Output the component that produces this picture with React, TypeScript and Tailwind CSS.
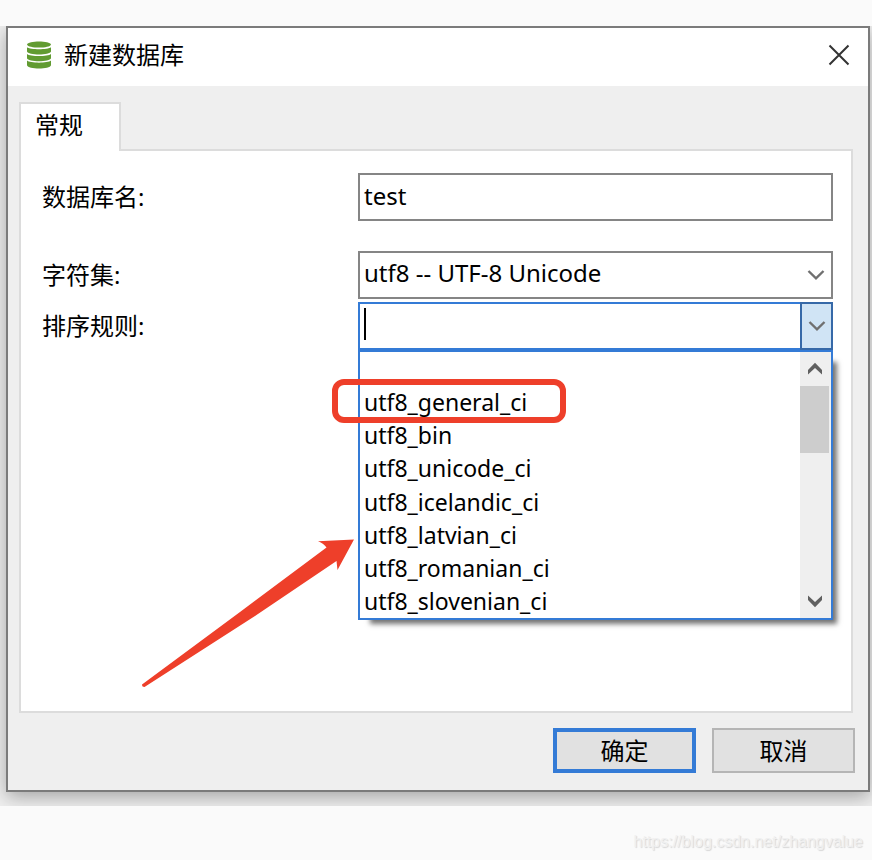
import React, { useState } from 'react';

const collations = [
  '',
  'utf8_general_ci',
  'utf8_bin',
  'utf8_unicode_ci',
  'utf8_icelandic_ci',
  'utf8_latvian_ci',
  'utf8_romanian_ci',
  'utf8_slovenian_ci',
];

const DatabaseIcon = () => (
  <svg width="24" height="28" viewBox="0 0 24 28" fill="#619b31" aria-hidden="true">
    <path d="M0 3.400C1-.6 23-.6 24 3.400 23 7.600 1 7.600 0 3.400z" />
    <path d="M0 6.200c3 2.600 21 2.600 24 0v4.400c-1 4-23 4-24 0z" />
    <path d="M0 13c3 2.700 21 2.700 24 0v4.200c-1 4-23 4-24 0z" />
    <path d="M0 19.600c3 2.700 21 2.700 24 0v4.600c-1 4.400-23 4.400-24 0z" />
  </svg>
);

const ComboChevron = () => (
  <svg width="18" height="12" viewBox="0 0 18 12" fill="none" stroke="#707070" strokeWidth="2.400" aria-hidden="true">
    <path d="M1.500 2 9 9.300 16.500 2" />
  </svg>
);

const ScrollChevron = ({ down = false }: { down?: boolean }) => (
  <svg width="16" height="14" viewBox="0 0 16 14" fill="#606060" aria-hidden="true">
    {down ? <path d="M1 1.500 8 8 15 1.500V6L8 13.200 1 6z" /> : <path d="M1 12.500 8 6l7 6.500V8L8 .8 1 8z" />}
  </svg>
);

const App: React.FC = () => {
  const [name, setName] = useState('test');
  const [collation, setCollation] = useState('');

  return (
    <div className="min-h-screen bg-[#fafafa] pt-[26px] font-['Noto_Sans','Noto_Sans_CJK_SC',sans-serif] text-[24px] text-black">
      <div className="overflow-hidden bg-[#f0f0f0] pl-[6px] pr-[2px] pb-[14px]">
        <div className="border-2 border-[#7b7b7b] bg-[#efefef] shadow-[0_5px_18px_rgba(0,0,0,0.32)]">
          {/* Title bar */}
          <div className="flex h-[58px] items-center bg-white pl-[19px] pr-[18px] pb-1">
            <DatabaseIcon />
            <h1 className="ml-[13px] flex-1">新建数据库</h1>
            <button aria-label="关闭">
              <svg width="22" height="22" viewBox="0 0 22 22" stroke="#333" strokeWidth="2" aria-hidden="true">
                <path d="M1.500 1.500l19 19M20.500 1.500l-19 19" />
              </svg>
            </button>
          </div>

          <div className="pl-[11px] pr-[15px] pt-4">
            {/* Tabs */}
            <div role="tablist" className="flex">
              <button
                role="tab"
                aria-selected="true"
                className="relative z-10 -mb-[2px] h-[49px] w-[102px] border-2 border-b-0 border-[#dcdcdc] bg-white pb-[6px] pl-[14px] text-left leading-none"
              >
                常规
              </button>
            </div>

            {/* General panel */}
            <div className="min-h-[564px] border-2 border-[#dcdcdc] bg-white pl-[21px] pr-[18px] pt-[22px]">
              <div className="grid grid-cols-[316px_1fr]">
                <label htmlFor="db-name" className="leading-[48px]">数据库名:</label>
                <input
                  id="db-name"
                  type="text"
                  value={name}
                  onChange={e => setName(e.target.value)}
                  className="mb-[30px] h-12 w-full border-2 border-[#858585] bg-white px-1 pb-1 outline-none"
                />

                <label htmlFor="charset" className="leading-[48px]">字符集:</label>
                <div className="relative mb-[3px]">
                  <select
                    id="charset"
                    className="h-12 w-full appearance-none border-2 border-[#858585] bg-white px-1 pb-1 outline-none"
                  >
                    <option>utf8 -- UTF-8 Unicode</option>
                  </select>
                  <span className="pointer-events-none absolute inset-y-0 right-2 flex items-center">
                    <ComboChevron />
                  </span>
                </div>

                <label htmlFor="collation" className="leading-[48px]">排序规则:</label>
                <div className="relative">
                  <div className="relative flex h-12">
                    <input
                      id="collation"
                      type="text"
                      role="combobox"
                      aria-expanded="true"
                      aria-controls="collation-list"
                      value={collation}
                      onChange={e => setCollation(e.target.value)}
                      className="h-full min-w-0 flex-1 border-2 border-r-0 border-[#347bd6] bg-white px-1 outline-none"
                    />
                    {/* Text cursor */}
                    {!collation && <span className="absolute left-[6px] top-[6px] h-8 w-[2px] bg-black" />}
                    <button
                      aria-label="展开"
                      className="flex w-[33px] items-center justify-center border-2 border-[#3669a8] bg-[#d0e4f5]"
                    >
                      <ComboChevron />
                    </button>
                  </div>

                  {/* Opened list */}
                  <div className="absolute left-0 right-0 top-12 flex h-[270px] border-2 border-[#347bd6] bg-white shadow-[8px_8px_5px_-4px_rgba(0,0,0,0.55)]">
                    <ul id="collation-list" role="listbox" className="flex flex-1 flex-col text-[23px]">
                      {collations.map(item => (
                        <li
                          key={item}
                          role="option"
                          aria-selected={item === collation}
                          onClick={() => setCollation(item)}
                          className="relative flex flex-1 items-center pl-1 leading-8"
                        >
                          {item}
                          {item === 'utf8_general_ci' && (
                            <span className="pointer-events-none absolute -left-7 -top-[6px] h-11 w-[234px] rounded-xl border-6 border-[#ee3f2a]" />
                          )}
                        </li>
                      ))}
                    </ul>
                    <div className="flex w-[31px] flex-col bg-[#efefef] pr-[2px]">
                      <button aria-label="向上" className="flex h-[34px] items-center justify-center">
                        <ScrollChevron />
                      </button>
                      <div className="h-[67px] bg-[#cdcdcd]" />
                      <button aria-label="向下" className="mt-auto flex h-[34px] items-center justify-center">
                        <ScrollChevron down />
                      </button>
                    </div>
                    {/* Arrow pointing at the list */}
                    <svg
                      width="214"
                      height="150"
                      viewBox="0 0 214 150"
                      fill="#ee3f2a"
                      className="pointer-events-none absolute -left-[219px] top-[186px]"
                      aria-hidden="true"
                    >
                      <path d="M1 146.500 99 74 185.500 9.500Q183 5.500 177 3.200L213 1.500 196.500 32 195.500 23 114 78 3.500 149Q1 149 1 146.500z" />
                    </svg>
                  </div>
                </div>
              </div>
            </div>
          </div>

          {/* Footer */}
          <div className="flex justify-end gap-4 pb-[17px] pr-[13px] pt-[15px]">
            <button className="h-[45px] w-[143px] border-4 border-[#347bd6] bg-[#e1e1e1] leading-none">确定</button>
            <button className="h-[45px] w-[143px] border-2 border-[#b5b5b5] bg-[#e1e1e1] leading-none">取消</button>
          </div>
        </div>
      </div>
      <p className="pr-[9px] pt-6 text-right font-['Liberation_Sans',sans-serif] text-base text-[#f0f0f0] [text-shadow:1px_1px_1px_#d6d6d6]">
        https://blog.csdn.net/zhangvalue
      </p>
    </div>
  );
};

export default App;
